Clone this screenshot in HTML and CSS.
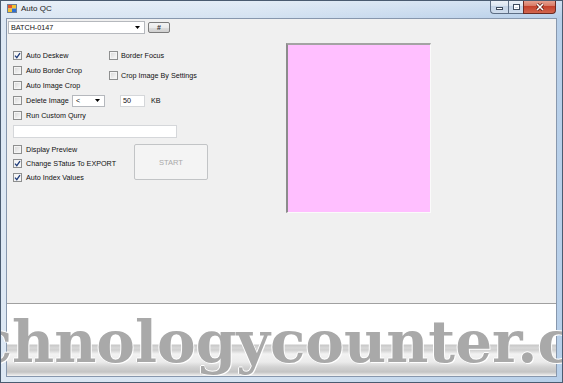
FILE: index.html
```html
<!DOCTYPE html>
<html>
<head>
<meta charset="utf-8">
<link rel="stylesheet" href="styles.css">
</head>
<body>
<div class="window">
  <div class="titlebar">
    <svg class="appicon" width="10" height="9" viewBox="0 0 10 9">
      <rect x="0.5" y="0.5" width="9" height="8" fill="#f4f4f4" stroke="#6b7f99"/>
      <rect x="1" y="1" width="4" height="3.5" fill="#e2572b"/>
      <rect x="5" y="1" width="4" height="3.5" fill="#f2c230"/>
      <rect x="1" y="4.5" width="4" height="3.5" fill="#f2c230"/>
      <rect x="5" y="4.5" width="4" height="3.5" fill="#2f6fd0"/>
    </svg>
    <span class="title">Auto QC</span>
    <div class="caption">
      <div class="cbtn min"><span class="minbar"></span></div>
      <div class="cbtn max"><span class="maxbox"></span></div>
      <div class="cbtn close">
        <svg width="10" height="8" viewBox="0 0 10 8">
          <path d="M2 1 L8 7 M8 1 L2 7" stroke="#5a1a12" stroke-width="3" fill="none"/>
          <path d="M2 1 L8 7 M8 1 L2 7" stroke="#ffffff" stroke-width="1.6" fill="none"/>
        </svg>
      </div>
    </div>
  </div>
  <div class="client">
    <div class="form">
      <div class="leftcol">
        <div class="toprow">
          <div class="combo batch"><span class="ctext">BATCH-0147</span><svg class="arrow" width="5" height="3" viewBox="0 0 5 3"><polygon points="0,0 5,0 2.5,3" fill="#000"/></svg></div>
          <div class="btn hash">#</div>
        </div>
        <div class="opts">
          <div class="col1">
            <div class="chk"><span class="box on"><svg width="7" height="7" viewBox="0 0 7 7"><path d="M1 3.6 L2.8 5.6 L6 1.2" stroke="#1f3c7a" stroke-width="1.3" fill="none"/></svg></span>Auto Deskew</div>
            <div class="chk"><span class="box"></span>Auto Border Crop</div>
            <div class="chk"><span class="box"></span>Auto Image Crop</div>
          </div>
          <div class="col2">
            <div class="chk"><span class="box"></span>Border Focus</div>
            <div class="chk gap"><span class="box"></span>Crop Image By Settings</div>
          </div>
        </div>
        <div class="delrow">
          <div class="chk del"><span class="box"></span>Delete Image</div>
          <div class="combo small"><span class="ctext">&lt;</span><svg class="arrow" width="5" height="3" viewBox="0 0 5 3"><polygon points="0,0 5,0 2.5,3" fill="#000"/></svg></div>
          <div class="textbox num">50</div>
          <span class="kb">KB</span>
        </div>
        <div class="chk indent"><span class="box"></span>Run Custom Qurry</div>
        <div class="textbox wide"></div>
        <div class="lower">
          <div class="col3">
            <div class="chk"><span class="box"></span>Display Preview</div>
            <div class="chk"><span class="box on"><svg width="7" height="7" viewBox="0 0 7 7"><path d="M1 3.6 L2.8 5.6 L6 1.2" stroke="#1f3c7a" stroke-width="1.3" fill="none"/></svg></span>Change STatus To EXPORT</div>
            <div class="chk"><span class="box on"><svg width="7" height="7" viewBox="0 0 7 7"><path d="M1 3.6 L2.8 5.6 L6 1.2" stroke="#1f3c7a" stroke-width="1.3" fill="none"/></svg></span>Auto Index Values</div>
          </div>
          <div class="btn start">START</div>
        </div>
      </div>
      <div class="preview"></div>
    </div>
    <div class="log"></div>
  </div>
  <div class="watermark">technologycounter.com</div>
</div>
</body>
</html>
```
FILE: styles.css
```css
* { box-sizing: border-box; }
body {
  margin: 0;
  font-family: "Liberation Sans", Arial, sans-serif;
  font-size: 7.2px;
  color: #111;
}
.window {
  position: relative;
  width: 563px;
  height: 383px;
  display: flex;
  flex-direction: column;
  background: linear-gradient(90deg, #dde8f4 0%, #d4e2f1 45%, #c2d6ec 80%, #b7cfe9 100%);
  border: 1px solid #4a5b70;
  overflow: hidden;
}
.titlebar {
  height: 17px;
  display: flex;
  align-items: flex-start;
  background: linear-gradient(180deg, rgba(255,255,255,0.35), rgba(255,255,255,0));
}
.appicon { margin: 3px 0 0 6px; }
.title {
  margin: 3px 0 0 4px;
  font-size: 8px;
  line-height: 10px;
  color: #1b1b1b;
}
.caption {
  margin: -1px 6px 0 auto;
  display: flex;
  height: 14px;
}
.cbtn {
  height: 14px;
  display: flex;
  align-items: center;
  justify-content: center;
  border: 1px solid #5d6e85;
  border-top: none;
}
.min {
  width: 18px;
  border-right: none;
  border-bottom-left-radius: 4px;
  background: linear-gradient(180deg, #eef3f9 0%, #dbe5f1 45%, #c3d3e6 50%, #cfdcec 100%);
}
.max {
  width: 15px;
  border-right: none;
  background: linear-gradient(180deg, #eef3f9 0%, #dbe5f1 45%, #c3d3e6 50%, #cfdcec 100%);
}
.close {
  width: 33px;
  border-color: #6b2a22;
  border-bottom-right-radius: 4px;
  background: linear-gradient(180deg, #e9a898 0%, #d97a66 45%, #c5412c 50%, #d2664e 100%);
}
.minbar {
  width: 7px;
  height: 3px;
  margin-top: 4px;
  background: #fff;
  border: 1px solid #3f4d60;
}
.maxbox {
  width: 7px;
  height: 6px;
  border: 1px solid #3f4d60;
  box-shadow: inset 0 0 0 1px #fff, inset 0 1px 0 1px #fff;
  background: #c9d6e6;
}
.client {
  flex: 1;
  margin: 0 5px 5px;
  border: 1px solid #8797ad;
  background: #f0f0f0;
  display: flex;
  flex-direction: column;
}
.form {
  height: 284px;
  display: flex;
  flex: none;
}
.leftcol {
  width: 202px;
  padding-top: 2px;
}
.toprow {
  display: flex;
  align-items: center;
  gap: 3px;
  margin-left: 1px;
  height: 13px;
}
.combo {
  display: flex;
  align-items: center;
  background: #fff;
  border: 1px solid #b5b8bd;
  padding: 0 4px 0 2px;
}
.ctext { flex: 1; }
.batch { width: 137px; height: 13px; }
.btn {
  display: flex;
  align-items: center;
  justify-content: center;
  border: 1px solid #7b7b7b;
  border-radius: 2px;
  background: linear-gradient(180deg, #f3f3f3 0%, #ebebeb 50%, #dddddd 51%, #d0d0d0 100%);
}
.hash {
  width: 22px;
  height: 11px;
  font-size: 7px;
  font-weight: bold;
  color: #333;
}
.opts {
  display: flex;
  margin-top: 14px;
  padding-left: 6px;
}
.col1 { width: 96px; display: flex; flex-direction: column; }
.col2 { display: flex; flex-direction: column; }
.chk {
  display: flex;
  align-items: center;
  height: 15px;
  gap: 4px;
  white-space: nowrap;
}
.col2 .chk { gap: 3px; }
.chk.gap { margin-top: 5px; }
.box {
  width: 9px;
  height: 9px;
  flex: none;
  border: 1px solid #8e8f8f;
  background: linear-gradient(135deg, #d6d6d6 0%, #f0f0f0 70%, #fbfbfb 100%);
  box-shadow: inset 0 0 0 1px #f4f4f4;
  display: flex;
  align-items: center;
  justify-content: center;
}
.box.on { background: #f6f6f6; }
.delrow {
  display: flex;
  align-items: center;
  height: 15px;
  padding-left: 6px;
}
.chk.del { width: 59px; }
.small { width: 33px; height: 12px; padding-left: 3px; }
.textbox {
  background: #fff;
  border: 1px solid #d5d7da;
}
.num {
  width: 25px;
  height: 12px;
  margin-left: 15px;
  padding-left: 2px;
  line-height: 10px;
}
.kb { margin-left: 6px; }
.indent { padding-left: 6px; }
.wide {
  margin: 2px 0 0 6px;
  width: 164px;
  height: 13px;
}
.lower {
  display: flex;
  margin-top: 4px;
  padding-left: 6px;
}
.col3 { width: 121px; display: flex; flex-direction: column; }
.col3 .chk { height: 14px; }
.start {
  width: 74px;
  height: 36px;
  margin-top: 2px;
  border-color: #c2c4c6;
  background: #f4f4f4;
  color: #a9a9a9;
  font-size: 7.5px;
}
.preview {
  margin: 24px 0 0 77px;
  width: 145px;
  height: 170px;
  background: #ffbfff;
  border-top: 2px solid #a3a3a3;
  border-left: 2px solid #8c8c8c;
  border-right: 1px solid #fafafa;
  border-bottom: 1px solid #fafafa;
}
.log {
  flex: 1;
  border-top: 1px solid #a0a0a0;
  background: linear-gradient(180deg, #ffffff 0px, #ffffff 40px, #c8c8c8 41px, #d8d8d8 44px, #cfcfcf 46px, #f2f2f2 50px, #ebebeb 58px, #d2d2d2 63px, #c4c4c4 68px, #e8e8e8 71px, #f4f4f4 72px);
}
.watermark {
  position: absolute;
  left: -88px;
  top: 312px;
  font-family: "DejaVu Serif", serif;
  font-weight: bold;
  font-size: 58px;
  line-height: 1;
  color: #a9a9a9;
  white-space: nowrap;
  text-shadow: 1px 1px 0 #fff, -1px 0 0 #fff, 0 -1px 0 #fff;
}
```
